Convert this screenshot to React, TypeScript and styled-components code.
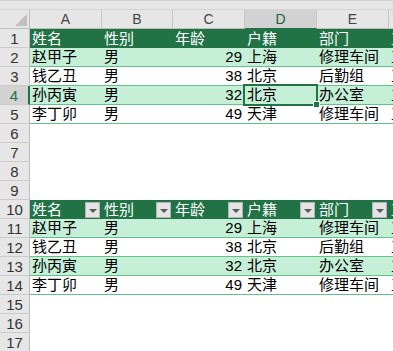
import React from 'react'
import { styled, createGlobalStyle } from 'styled-components'

const GlobalStyle = createGlobalStyle`
body {
  margin: 0;
  background: #ffffff;
  overflow: hidden;
}
`

const GREEN = '#217346'
const MINT = '#c6efd8'
const LINE = '#63c387'
const FONT = `"Liberation Sans", "Noto Sans CJK SC", sans-serif`

type Kind = 'head' | 'band' | 'plain' | 'empty'

const Sheet = styled.div`
width: 393px;
height: 351px;
overflow: hidden;
font-family: ${FONT};
`

const TopStrip = styled.div`
height: 10px;
background: #e6e6e6;
border-top: 1px solid #d0d0d0;
border-bottom: 1px solid #d4d4d4;
box-sizing: border-box;
`

const Grid = styled.div`
display: grid;
grid-template-columns: 30px 72px 71px 72px 72px 72px 1fr;
grid-auto-rows: 19px;
`

const Corner = styled.div`
position: relative;
background: #e6e6e6;
border-right: 1px solid #bdbdbd;
border-bottom: 1px solid #bdbdbd;
box-sizing: border-box;
&::after {
  content: "";
  position: absolute;
  right: 2px;
  bottom: 2px;
  width: 0;
  height: 0;
  border-left: 12px solid transparent;
  border-bottom: 12px solid #bfbfbf;
}
`

const ColHead = styled.div<{ $selected?: boolean }>`
display: flex;
align-items: center;
justify-content: center;
background: ${({ $selected }) => ($selected ? '#d2d2d2' : '#e6e6e6')};
color: ${({ $selected }) => ($selected ? '#1f5e3b' : '#444444')};
border-right: 1px solid #c6c6c6;
border-bottom: 1px solid ${({ $selected }) => ($selected ? GREEN : '#bdbdbd')};
box-sizing: border-box;
font-size: 14px;
overflow: hidden;
`

const RowHead = styled.div<{ $selected?: boolean }>`
display: flex;
align-items: center;
justify-content: center;
background: ${({ $selected }) => ($selected ? '#d2d2d2' : '#e6e6e6')};
color: ${({ $selected }) => ($selected ? GREEN : '#333333')};
border-right: ${({ $selected }) => ($selected ? `2px solid ${GREEN}` : '1px solid #bdbdbd')};
border-bottom: 1px solid #cbcbcb;
box-sizing: border-box;
font-size: 15px;
`

const Cell = styled.div<{ $kind: Kind; $right?: boolean }>`
position: relative;
display: flex;
align-items: center;
justify-content: ${({ $right }) => ($right ? 'flex-end' : 'space-between')};
padding: 0 3px 0 2px;
box-sizing: border-box;
white-space: nowrap;
overflow: ${({ $kind }) => ($kind === 'head' ? 'hidden' : 'visible')};
font-size: 15px;
line-height: 18px;
background: ${({ $kind }) =>
  $kind === 'head' ? GREEN : $kind === 'band' ? MINT : '#ffffff'};
color: ${({ $kind }) => ($kind === 'head' ? '#ffffff' : '#000000')};
border-bottom: ${({ $kind }) =>
  $kind === 'band' || $kind === 'plain' ? `1px solid ${LINE}` : 'none'};
`

const FilterButton = styled.span`
flex: none;
position: relative;
width: 15px;
height: 16px;
margin-right: -1px;
background: #e4e4e4;
border: 1px solid #b4b4b4;
box-sizing: border-box;
&::after {
  content: "";
  position: absolute;
  left: 3px;
  top: 6px;
  border-left: 4px solid transparent;
  border-right: 4px solid transparent;
  border-top: 4px solid #595959;
}
`

const ActiveBox = styled.div`
position: absolute;
z-index: 2;
left: -2px;
top: -2px;
right: -1px;
bottom: -2px;
border: 2px solid ${GREEN};
pointer-events: none;
&::after {
  content: "";
  position: absolute;
  right: -4px;
  bottom: -4px;
  width: 5px;
  height: 5px;
  background: ${GREEN};
  border: 1px solid #ffffff;
}
`

const Clip = styled.div`
overflow: hidden;
`

const letters = ['A', 'B', 'C', 'D', 'E', 'F']
const headers = ['姓名', '性别', '年龄', '户籍', '部门', '工资']
const people: (string | number)[][] = [
  ['赵甲子', '男', 29, '上海', '修理车间', '工人'],
  ['钱乙丑', '男', 38, '北京', '后勤组', '工人'],
  ['孙丙寅', '男', 32, '北京', '办公室', '主任'],
  ['李丁卯', '男', 49, '天津', '修理车间', '工人'],
]

type RowDef =
  | { type: 'head'; filter: boolean }
  | { type: 'data'; values: (string | number)[]; band: boolean }
  | { type: 'empty' }

const rowDefs: RowDef[] = [
  { type: 'head', filter: false },
  ...people.map((values, i) => ({ type: 'data' as const, values, band: i % 2 === 0 })),
  { type: 'empty' },
  { type: 'empty' },
  { type: 'empty' },
  { type: 'empty' },
  { type: 'head', filter: true },
  ...people.map((values, i) => ({ type: 'data' as const, values, band: i % 2 === 0 })),
  { type: 'empty' },
  { type: 'empty' },
  { type: 'empty' },
]

export default function App() {
  return (
    <Sheet>
      <GlobalStyle />
      <TopStrip />
      <Clip>
        <Grid>
          <Corner />
          {letters.map((l) => (
            <ColHead key={l} $selected={l === 'D'}>{l}</ColHead>
          ))}

          {rowDefs.map((row, r) => {
            const num = r + 1
            return (
              <React.Fragment key={num}>
                <RowHead $selected={num === 4}>{num}</RowHead>
                {letters.map((l, c) => {
                  if (row.type === 'empty') return <Cell key={l} $kind="empty" />
                  if (row.type === 'head')
                    return (
                      <Cell key={l} $kind="head">
                        <span>{headers[c]}</span>
                        {row.filter && <FilterButton />}
                      </Cell>
                    )
                  const v = row.values[c]
                  return (
                    <Cell key={l} $kind={row.band ? 'band' : 'plain'} $right={typeof v === 'number'}>
                      {v}
                      {num === 4 && l === 'D' && <ActiveBox />}
                    </Cell>
                  )
                })}
              </React.Fragment>
            )
          })}
        </Grid>
      </Clip>
    </Sheet>
  )
}
